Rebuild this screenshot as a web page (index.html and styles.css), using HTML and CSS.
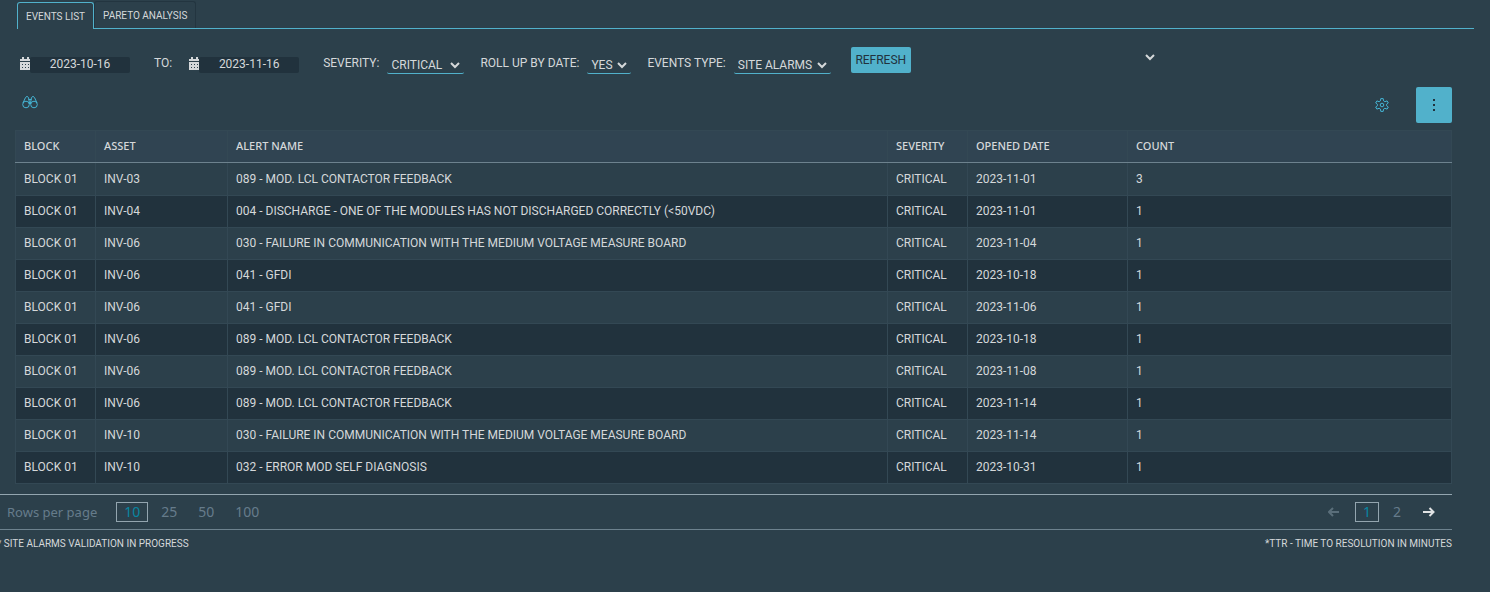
FILE: index.html
```html
<!DOCTYPE html>
<html lang="en">
<head>
<meta charset="utf-8">
<title>Events List</title>
<link rel="stylesheet" href="styles.css">
</head>
<body>
<nav class="tabs">
  <button class="tab tab-active" type="button">EVENTS LIST</button>
  <button class="tab" type="button">PARETO ANALYSIS</button>
</nav>

<form class="filters">
  <label class="date-field date-from">
    <svg class="calendar" viewBox="0 0 11 13" aria-hidden="true"><path d="M0 4V2h2V0h2v2h3V0h2v2h2v2zM0 5h11v8H0zM2 7v1h1V7zm3 0v1h1V7zm3 0v1h1V7zM2 10v1h1v-1zm3 0v1h1v-1zm3 0v1h1v-1z" fill-rule="evenodd"/></svg>
    <input class="date-input" type="text" value="2023-10-16" aria-label="From date">
  </label>
  <label class="caption caption-to" for="date-to">TO:</label>
  <div class="date-field date-until">
    <svg class="calendar" viewBox="0 0 11 13" aria-hidden="true"><path d="M0 4V2h2V0h2v2h3V0h2v2h2v2zM0 5h11v8H0zM2 7v1h1V7zm3 0v1h1V7zm3 0v1h1V7zM2 10v1h1v-1zm3 0v1h1v-1zm3 0v1h1v-1z" fill-rule="evenodd"/></svg>
    <input class="date-input" id="date-to" type="text" value="2023-11-16">
  </div>
  <label class="caption" for="severity">SEVERITY:</label>
  <span class="select-wrap select-severity">
    <select class="select" id="severity"><option>CRITICAL</option></select>
    <svg class="chevron" viewBox="0 0 10 7" aria-hidden="true"><path d="M1 1l4 4 4-4"/></svg>
  </span>
  <label class="caption" for="rollup">ROLL UP BY DATE:</label>
  <span class="select-wrap select-rollup">
    <select class="select" id="rollup"><option>YES</option></select>
    <svg class="chevron" viewBox="0 0 10 7" aria-hidden="true"><path d="M1 1l4 4 4-4"/></svg>
  </span>
  <label class="caption" for="type">EVENTS TYPE:</label>
  <span class="select-wrap select-type">
    <select class="select" id="type"><option>SITE ALARMS</option></select>
    <svg class="chevron" viewBox="0 0 10 7" aria-hidden="true"><path d="M1 1l4 4 4-4"/></svg>
  </span>
  <button class="refresh" type="button">REFRESH</button>
  <button class="expand" type="button" aria-label="Expand filters">
    <svg class="expand-icon" viewBox="0 0 10 7" aria-hidden="true"><path d="M1 1l4 4 4-4"/></svg>
  </button>
</form>

<div class="toolbar">
  <button class="icon-button search" type="button" aria-label="Search">
    <svg width="16" height="14" viewBox="0 0 16 14" aria-hidden="true"><circle cx="4" cy="9.500" r="3.300"/><circle cx="12" cy="9.500" r="3.300"/><path d="M1 8L3.500 2.500Q5 .2 6.500 2.500L7.500 8M15 8L12.500 2.500Q11 .2 9.500 2.500L8.500 8M6.500 4.500h3M7 8.500h2"/></svg>
  </button>
  <button class="icon-button settings" type="button" aria-label="Settings">
    <svg width="14" height="14" viewBox="0 0 14 14" aria-hidden="true"><path d="M5.800.6h2.400l.4 2.300 1.300.8 2.200-.8 1.200 2.100L11.500 6.400v1.200l1.800 1.400-1.200 2.100-2.200-.8-1.300.8-.4 2.300H5.800l-.4-2.300-1.300-.8-2.200.8L.7 9l1.800-1.400V6.400L.7 5l1.200-2.100 2.200.8 1.300-.8z"/><circle cx="7" cy="7" r="1.800"/></svg>
  </button>
  <button class="more" type="button" aria-label="More actions">
    <svg width="2" height="12" viewBox="0 0 2 12" aria-hidden="true"><path d="M0 0h2v2H0zM0 5h2v2H0zM0 10h2v2H0z"/></svg>
  </button>
</div>

<table class="events">
  <colgroup><col class="col-block"><col class="col-asset"><col class="col-name"><col class="col-severity"><col class="col-date"><col class="col-count"></colgroup>
  <thead>
    <tr><th>BLOCK</th><th>ASSET</th><th>ALERT NAME</th><th>SEVERITY</th><th>OPENED DATE</th><th>COUNT</th></tr>
  </thead>
  <tbody>
    <tr><td>BLOCK 01</td><td>INV-03</td><td>089 - MOD. LCL CONTACTOR FEEDBACK</td><td>CRITICAL</td><td>2023-11-01</td><td>3</td></tr>
    <tr><td>BLOCK 01</td><td>INV-04</td><td>004 - DISCHARGE - ONE OF THE MODULES HAS NOT DISCHARGED CORRECTLY (&lt;50VDC)</td><td>CRITICAL</td><td>2023-11-01</td><td>1</td></tr>
    <tr><td>BLOCK 01</td><td>INV-06</td><td>030 - FAILURE IN COMMUNICATION WITH THE MEDIUM VOLTAGE MEASURE BOARD</td><td>CRITICAL</td><td>2023-11-04</td><td>1</td></tr>
    <tr><td>BLOCK 01</td><td>INV-06</td><td>041 - GFDI</td><td>CRITICAL</td><td>2023-10-18</td><td>1</td></tr>
    <tr><td>BLOCK 01</td><td>INV-06</td><td>041 - GFDI</td><td>CRITICAL</td><td>2023-11-06</td><td>1</td></tr>
    <tr><td>BLOCK 01</td><td>INV-06</td><td>089 - MOD. LCL CONTACTOR FEEDBACK</td><td>CRITICAL</td><td>2023-10-18</td><td>1</td></tr>
    <tr><td>BLOCK 01</td><td>INV-06</td><td>089 - MOD. LCL CONTACTOR FEEDBACK</td><td>CRITICAL</td><td>2023-11-08</td><td>1</td></tr>
    <tr><td>BLOCK 01</td><td>INV-06</td><td>089 - MOD. LCL CONTACTOR FEEDBACK</td><td>CRITICAL</td><td>2023-11-14</td><td>1</td></tr>
    <tr><td>BLOCK 01</td><td>INV-10</td><td>030 - FAILURE IN COMMUNICATION WITH THE MEDIUM VOLTAGE MEASURE BOARD</td><td>CRITICAL</td><td>2023-11-14</td><td>1</td></tr>
    <tr><td>BLOCK 01</td><td>INV-10</td><td>032 - ERROR MOD SELF DIAGNOSIS</td><td>CRITICAL</td><td>2023-10-31</td><td>1</td></tr>
  </tbody>
</table>

<div class="pager">
  <span class="pager-label">Rows per page</span>
  <button class="page page-size page-current" type="button">10</button>
  <button class="page page-size" type="button">25</button>
  <button class="page page-size" type="button">50</button>
  <button class="page page-size" type="button">100</button>
  <button class="arrow arrow-prev" type="button" aria-label="Previous page" disabled>
    <svg width="12" height="10" viewBox="0 0 12 10" aria-hidden="true"><path d="M11 5H1M5 1L1 5l4 4"/></svg>
  </button>
  <button class="page page-current" type="button">1</button>
  <button class="page" type="button">2</button>
  <button class="arrow arrow-next" type="button" aria-label="Next page">
    <svg width="12" height="10" viewBox="0 0 12 10" aria-hidden="true"><path d="M0 5h10.500M6.500 1l4 4-4 4"/></svg>
  </button>
</div>

<footer class="notes">
  <span class="note-left">* SITE ALARMS VALIDATION IN PROGRESS</span>
  <span>*TTR - TIME TO RESOLUTION IN MINUTES</span>
</footer>
</body>
</html>
```
FILE: styles.css
```css
* { box-sizing: border-box; }

body {
  margin: 0;
  min-height: 100vh;
  background: #2c404b;
  color: #d5d8da;
  font: 12px/16px Roboto, sans-serif;
  overflow-x: hidden;
}

button, input, select {
  margin: 0;
  padding: 0;
  border: 0;
  background: none;
  color: inherit;
  font: inherit;
}

svg { display: block; }

.tabs {
  display: flex;
  height: 29px;
  margin: 0 16px 0 17px;
  border-bottom: 1px solid #51b1cb;
}

.tab {
  height: 27px;
  margin-top: 1px;
  padding: 2px 8px 0;
  border: 1px solid #233540;
  border-bottom: 0;
  border-radius: 3px 3px 0 0;
  font-size: 10px;
}

.tab-active {
  margin-top: 2px;
  border-color: #51b1cb;
  background: #2c404b;
}

.filters {
  display: flex;
  height: 51px;
  margin-right: 38px;
  padding: 18px 0 0 20px;
}

.date-field {
  display: flex;
  align-items: flex-start;
  height: 16px;
  margin-top: 10px;
}

.date-until { margin-right: 24px; }

.calendar {
  flex: none;
  width: 11px;
  height: 13px;
  margin-right: -1px;
  fill: #d5d8da;
}

.date-input {
  width: 100px;
  height: 16px;
  padding-bottom: 2px;
  border-radius: 2px;
  background: #21323d;
  text-align: center;
}

.caption {
  margin-top: 8px;
  white-space: nowrap;
}

.caption-to { margin: 8px 17px 0 24px; }

.select-wrap {
  position: relative;
  height: 18px;
  margin: 9px 16px 0 8px;
  border-bottom: 1px solid #51b1cb;
  border-radius: 2px;
}

.select {
  width: 100%;
  height: 17px;
  padding-left: 4px;
  appearance: none;
  color: #d5d8da;
}

.select-severity { width: 77px; }
.select-rollup { width: 44px; }
.select-type { width: 97px; margin-right: 20px; }

.chevron {
  position: absolute;
  top: 6px;
  right: 4px;
  width: 10px;
  height: 7px;
  pointer-events: none;
}

.chevron, .expand-icon {
  fill: none;
  stroke: #d5d8da;
  stroke-width: 2;
}

.refresh {
  width: 60px;
  height: 26px;
  border-radius: 2px;
  background: #51b1cb;
  color: #21323d;
}

.expand {
  height: 20px;
  margin: 0 297px 0 auto;
}

.expand-icon { width: 10px; height: 7px; }

.toolbar {
  display: flex;
  align-items: center;
  height: 50px;
  margin: 0 38px 0 22px;
}

.icon-button svg { fill: none; stroke: #45b4d4; }

.search { margin-bottom: 6px; }

.settings { margin: 0 27px 0 auto; }

.more {
  display: grid;
  place-items: center;
  width: 36px;
  height: 36px;
  border-radius: 2px;
  background: #51b1cb;
  fill: #21323d;
}

.events {
  width: calc(100% - 53px);
  margin-left: 15px;
  border-collapse: collapse;
  table-layout: fixed;
}

.col-block { width: 80px; }
.col-asset { width: 132px; }
.col-name { width: 660px; }
.col-severity { width: 80px; }
.col-date { width: 160px; }

.events th, .events td {
  height: 32px;
  padding: 0 8px 2px;
  border: 1px solid #334854;
  text-align: left;
  white-space: nowrap;
}

.events th {
  border-bottom-color: #6d828e;
  background: #304452;
  font: 500 11px/16px "Noto Sans", sans-serif;
}

.events tbody tr:first-child td { height: 33px; padding-bottom: 1px; }

.events tbody tr:nth-child(even) { background: #21323d; }

.pager {
  display: flex;
  align-items: center;
  height: 36px;
  margin: 10px 38px 0 0;
  padding: 0 16px 0 7px;
  border-top: 1px solid #93a5af;
  border-bottom: 1px solid #6d828e;
  color: #667c8b;
  font: 14px/20px "Noto Sans", sans-serif;
}

.pager-label { margin-right: 19px; font-size: 13px; }

.page {
  min-width: 24px;
  height: 20px;
  margin-right: 6px;
  border: 1px solid transparent;
  line-height: 18px;
}

.page-size { padding: 0 7px; margin-right: 5px; }

.page-current {
  border-color: #93a5af;
  color: #0886a2;
}

.arrow svg { fill: none; stroke: currentColor; stroke-width: 2; }
.arrow-prev { margin: 0 15px 0 auto; color: #5a6e7a; }
.arrow-next { margin: 0 1px 0 8px; color: #e0e2e3; }

.notes {
  display: flex;
  justify-content: space-between;
  margin: 6px 38px 0 0;
  font-size: 10px;
}

.note-left { margin-left: -3px; }
```
